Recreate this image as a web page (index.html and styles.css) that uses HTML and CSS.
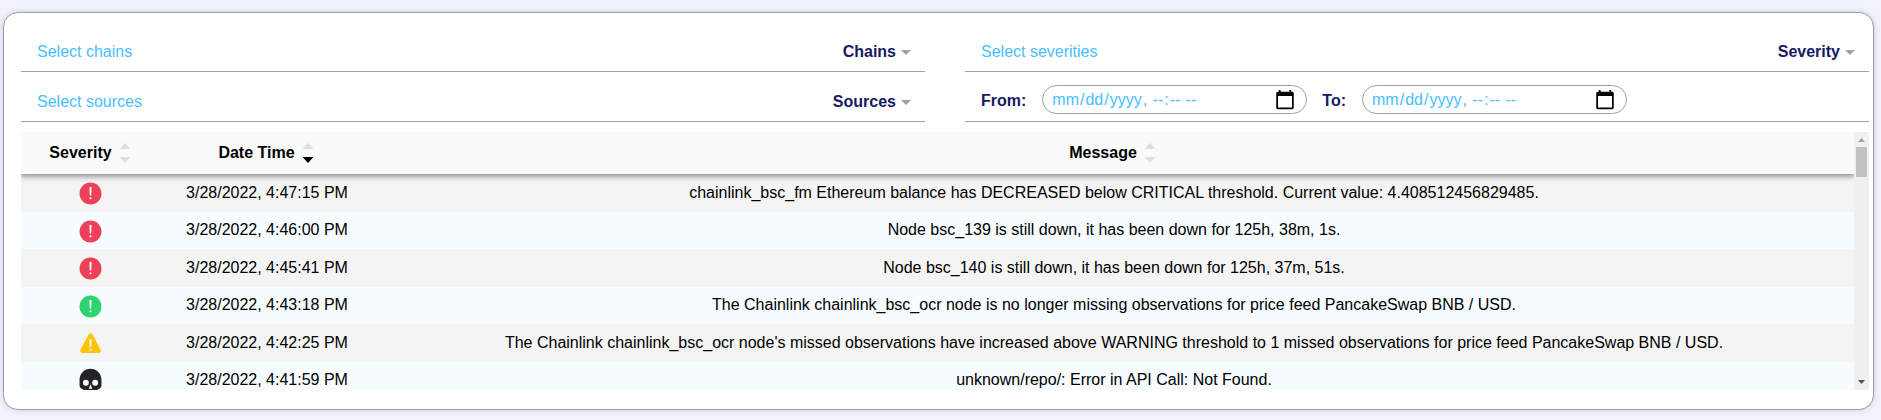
FILE: index.html
```html
<!DOCTYPE html>
<html lang="en">
<head>
<meta charset="utf-8">
<title>Alerts</title>
<link rel="stylesheet" href="styles.css">
</head>
<body>
<svg width="0" height="0" class="defs">
  <symbol id="critical" viewBox="0 0 512 512"><circle cx="256" cy="256" r="208" fill="currentColor"/><path d="M236 146q0-18 20-18t20 18l-6 137q-1 14-14 14t-14-14z" fill="#fff"/><circle cx="256" cy="347" r="20" fill="#fff"/></symbol>
  <symbol id="warning" viewBox="0 0 512 512"><path d="M449 375 291 82c-15-28-55-28-70 0L63 375c-14 27 5 59 35 59h316c30 0 49-32 35-59z" fill="currentColor"/><path d="M236 192q0-18 20-18t20 18l-6 122q-1 14-14 14t-14-14z" fill="#fff"/><circle cx="256" cy="374" r="20" fill="#fff"/></symbol>
  <symbol id="skull" viewBox="0 0 512 512"><path d="M256 16C141 16 48 109 48 224v101c0 33 20 62 50 74l12 5c10 4 17 12 19 22l10 44c2 16 14 26 29 26h24v-48h32v48h64v-48h32v48h24c15 0 27-10 29-26l10-44c2-10 9-18 19-22l12-5c30-12 50-41 50-74V224C464 109 371 16 256 16z" fill="currentColor"/><circle cx="168" cy="280" r="56" fill="#fff"/><circle cx="344" cy="280" r="56" fill="#fff"/><path d="m256 308 34 84h-68z" fill="#fff"/></symbol>
  <symbol id="sort" viewBox="0 0 10 20"><path class="up" d="M5 0 10 5.500V6H0v-.500z"/><path class="down" d="M0 14h10v.500L5 20 0 14.500z"/></symbol>
</svg>
<main class="card">
  <div class="filters">
    <div class="field"><span class="placeholder">Select chains</span><span class="name">Chains</span><i class="caret"></i></div>
    <div class="field"><span class="placeholder">Select severities</span><span class="name">Severity</span><i class="caret"></i></div>
    <div class="field"><span class="placeholder">Select sources</span><span class="name">Sources</span><i class="caret"></i></div>
    <div class="field dates">
      <label class="name" for="from">From:</label><input class="date" id="from" type="datetime-local">
      <label class="name" for="to">To:</label><input class="date" id="to" type="datetime-local">
    </div>
  </div>
  <div class="scroller">
    <div class="table">
      <div class="row head">
        <div>Severity<svg class="sort"><use href="#sort"/></svg></div>
        <div>Date Time<svg class="sort desc"><use href="#sort"/></svg></div>
        <div>Message<svg class="sort"><use href="#sort"/></svg></div>
      </div>
      <div class="row"><div><svg class="icon red"><use href="#critical"/></svg></div><div>3/28/2022, 4:47:15 PM</div><div>chainlink_bsc_fm Ethereum balance has DECREASED below CRITICAL threshold. Current value: 4.408512456829485.</div></div>
      <div class="row"><div><svg class="icon red"><use href="#critical"/></svg></div><div>3/28/2022, 4:46:00 PM</div><div>Node bsc_139 is still down, it has been down for 125h, 38m, 1s.</div></div>
      <div class="row"><div><svg class="icon red"><use href="#critical"/></svg></div><div>3/28/2022, 4:45:41 PM</div><div>Node bsc_140 is still down, it has been down for 125h, 37m, 51s.</div></div>
      <div class="row"><div><svg class="icon green"><use href="#critical"/></svg></div><div>3/28/2022, 4:43:18 PM</div><div>The Chainlink chainlink_bsc_ocr node is no longer missing observations for price feed PancakeSwap BNB / USD.</div></div>
      <div class="row"><div><svg class="icon yellow"><use href="#warning"/></svg></div><div>3/28/2022, 4:42:25 PM</div><div>The Chainlink chainlink_bsc_ocr node's missed observations have increased above WARNING threshold to 1 missed observations for price feed PancakeSwap BNB / USD.</div></div>
      <div class="row"><div><svg class="icon dark"><use href="#skull"/></svg></div><div>3/28/2022, 4:41:59 PM</div><div>unknown/repo/: Error in API Call: Not Found.</div></div>
    </div>
    <div class="scrollbar">
      <svg class="arrow" viewBox="0 0 15 15"><path d="M4 10h7L7.500 6z" fill="#a3a3a3"/></svg>
      <div class="thumb"></div>
      <svg class="arrow bottom" viewBox="0 0 15 15"><path d="M4 5h7L7.500 9z" fill="#505050"/></svg>
    </div>
  </div>
</main>
</body>
</html>
```
FILE: styles.css
```css
* { box-sizing: border-box; }
body {
  margin: 0;
  padding: 12px 7px 0 3px;
  height: 420px;
  overflow: hidden;
  background: #f0f3f9;
  font: 16px/18px "Liberation Sans", Arial, sans-serif;
  color: #000;
}
.defs { position: absolute; }
.card {
  height: 398px;
  padding: 9px 4px 0 17px;
  background: #fff;
  border: 1px solid #a0a0a2;
  border-radius: 15px;
  box-shadow: 0 0 5px #c5cadd;
}
.filters {
  display: grid;
  grid-template-columns: 904px 904px;
  column-gap: 40px;
  grid-auto-rows: 50px;
}
.field {
  display: flex;
  align-items: flex-end;
  padding: 0 14px 10px 16px;
  border-bottom: 1px solid #a0a0a2;
}
.placeholder { flex: 1; color: #49beff; }
.name { font-weight: bold; color: #161a63; }
.caret {
  margin: 0 0 6px 5px;
  border: 5px solid transparent;
  border-top-color: #a0a0a2;
  border-bottom: 0;
}
.dates { align-items: center; padding: 6px 0 0 16px; }
.dates .name { padding-top: 2px; }
.date {
  width: 264.5px;
  height: 29px;
  margin: 0 15.5px 0 16px;
  padding: 0 10px 0 8px;
  border: 1px solid #a0a0a2;
  border-radius: 15px;
  background: #fff;
  color: #49beff;
  font: 16px "Liberation Sans", Arial, sans-serif;
}
.date::-webkit-calendar-picker-indicator { width: 22px; height: 22px; padding: 0; }
.scroller { display: flex; height: 258px; margin-top: 10px; overflow: hidden; }
.table { width: 1833px; }
.row {
  display: grid;
  grid-template-columns: 139px 214px 1480px;
  height: 37.5px;
  background: #f4f4f4;
  text-align: center;
}
.row:nth-child(odd) { background: #f6fcff; }
.row > div { display: flex; align-items: center; justify-content: center; }
.row.head {
  position: relative;
  height: 42px;
  background: #fafafa;
  font-weight: bold;
  box-shadow: 0 1px 6px 1px #808080;
  clip-path: inset(0 0 -12px 0);
}
.row.head > div { padding-right: 2px; }
.row.head > div:nth-child(2) { padding-right: 3px; }
.row.head > div:nth-child(3) { padding-right: 4px; }
.sort { width: 10px; height: 20px; margin-left: 8px; fill: #dedede; }
.sort.desc { --down: #000; }
.down { fill: var(--down, #dedede); }
.icon { width: 27px; height: 27px; margin-top: 1.5px; }
.red { color: #ee4159; }
.green { color: #2dd36f; }
.yellow { color: #ffc409; }
.dark { color: #222428; }
.scrollbar { width: 15px; display: flex; flex-direction: column; background: #f0f0f0; }
.arrow { width: 15px; height: 15px; }
.bottom { margin-top: auto; }
.thumb { height: 30px; margin: 0 2px; background: #c1c1c1; }
```
